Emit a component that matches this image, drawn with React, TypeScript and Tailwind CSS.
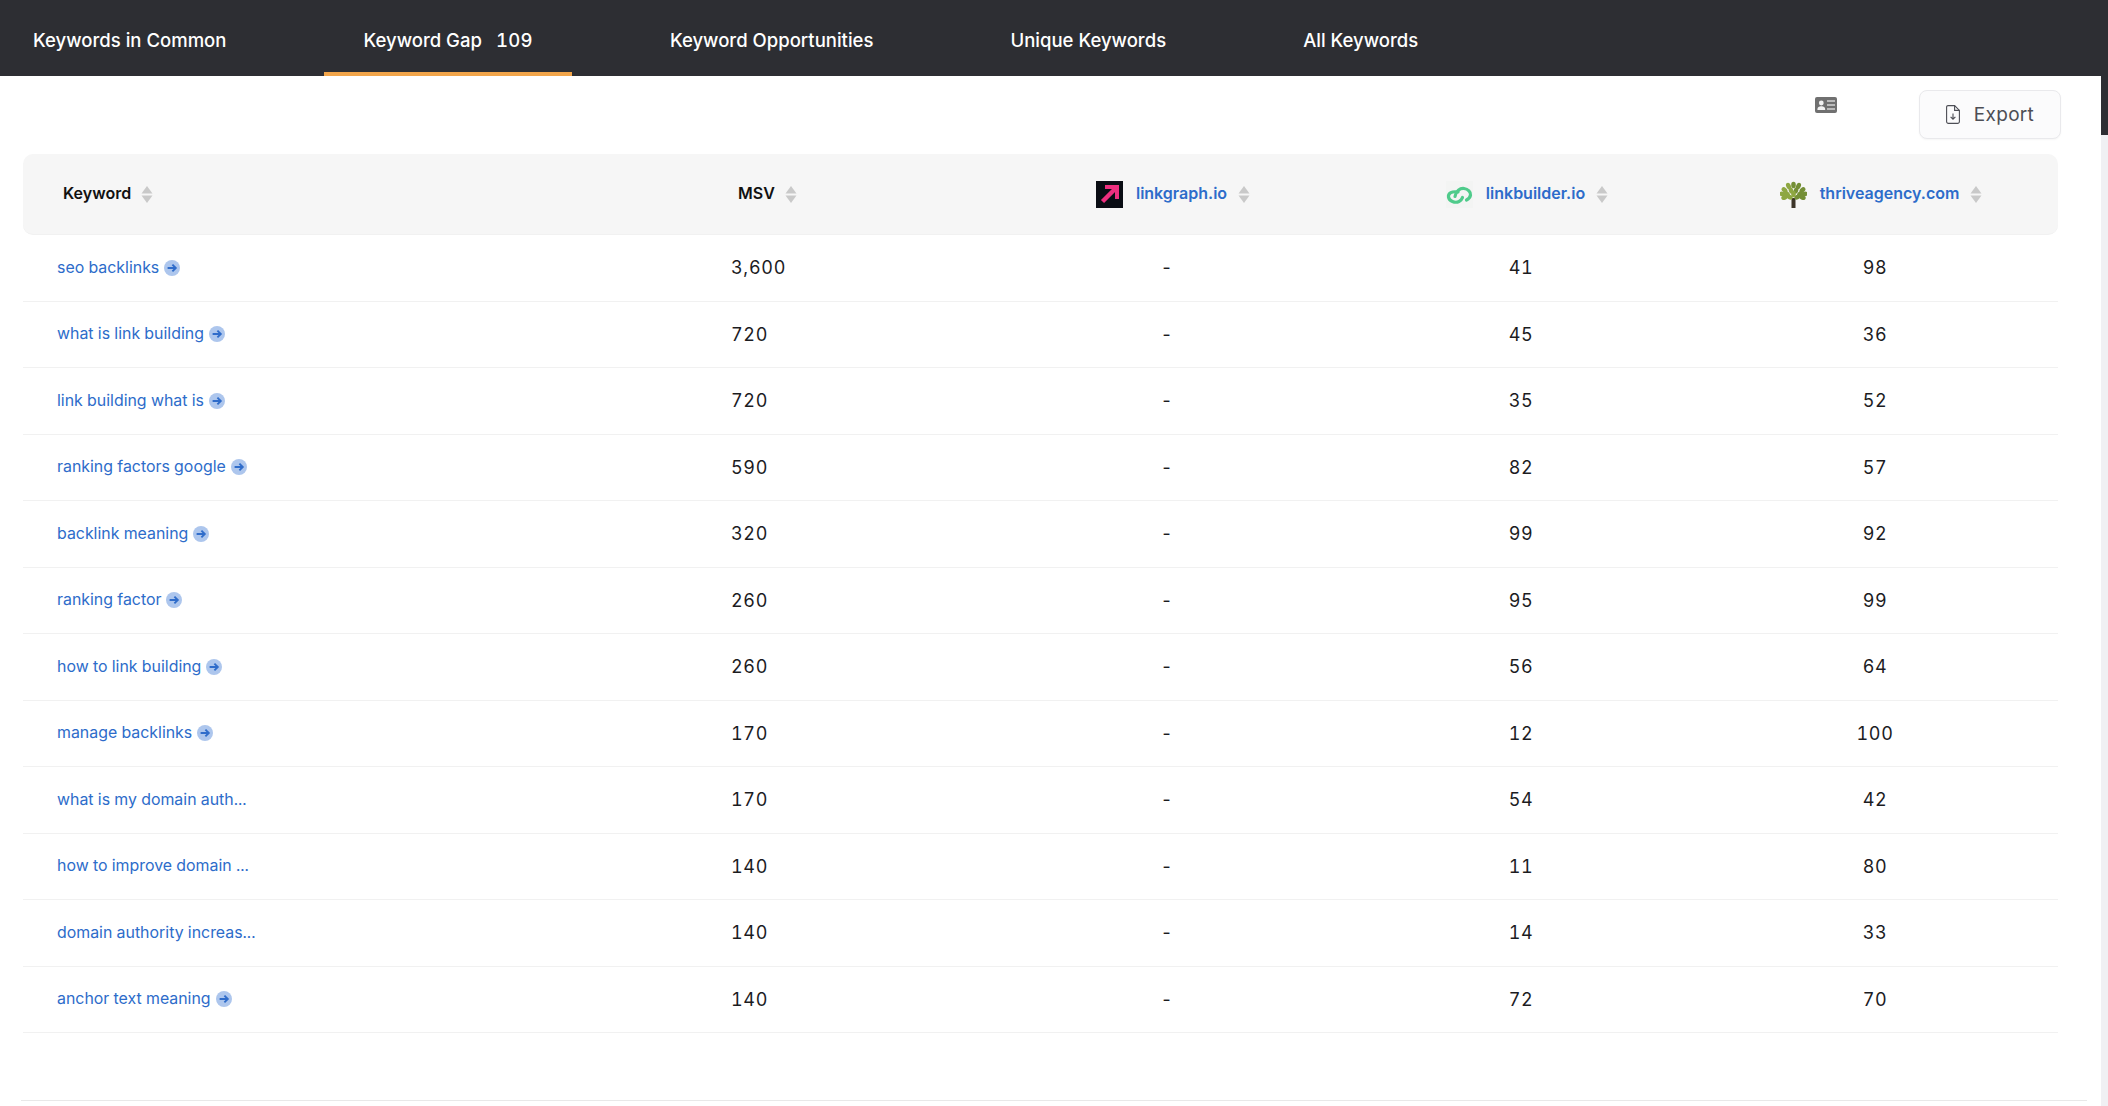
import React from "react";

const rows: [string, boolean, string, string, string][] = [
  ["seo backlinks", true, "3,600", "41", "98"],
  ["what is link building", true, "720", "45", "36"],
  ["link building what is", true, "720", "35", "52"],
  ["ranking factors google", true, "590", "82", "57"],
  ["backlink meaning", true, "320", "99", "92"],
  ["ranking factor", true, "260", "95", "99"],
  ["how to link building", true, "260", "56", "64"],
  ["manage backlinks", true, "170", "12", "100"],
  ["what is my domain auth...", false, "170", "54", "42"],
  ["how to improve domain ...", false, "140", "11", "80"],
  ["domain authority increas...", false, "140", "14", "33"],
  ["anchor text meaning", true, "140", "72", "70"],
];

function Sort() {
  return (
    <svg width="12" height="17" viewBox="0 0 12 17" className="shrink-0">
      <path d="M6 0L11.5 7.4H0.5Z" fill="#c9c9c9" />
      <path d="M6 17L11.5 9.4H0.5Z" fill="#c9c9c9" />
    </svg>
  );
}

function Go() {
  return (
    <svg width="16" height="16" viewBox="0 0 16 16" className="shrink-0">
      <circle cx="8" cy="8" r="8" fill="#adc6ed" />
      <path d="M3.6 8H11.6M8.4 4.6L11.8 8L8.4 11.4" fill="none" stroke="#2f6cca" strokeWidth="1.9" />
    </svg>
  );
}

function LinkGraphLogo() {
  return (
    <svg width="27" height="27" viewBox="0 0 27 27" className="shrink-0">
      <rect width="27" height="27" fill="#0a0d14" />
      <path d="M9 6H21V18" fill="none" stroke="#ee2f7f" strokeWidth="4" />
      <path d="M20 7L6.5 20.5" fill="none" stroke="#ee2f7f" strokeWidth="4.5" />
    </svg>
  );
}

function LinkBuilderLogo() {
  return (
    <svg width="27" height="27" viewBox="0 0 27 27" className="shrink-0">
      <rect width="27" height="27" fill="#f3f4f3" />
      <path d="M12 11C6 10 2 12 2.5 16C3 20 9 22.5 13 20.5C15 19.5 16 18 16.5 16.5" fill="none" stroke="#4fcb8b" strokeWidth="3.2" strokeLinecap="round" />
      <path d="M9 15.5C10 10 14 7 18 7.5C22 8 25 11 24.5 14C24.2 16.5 22.5 18 20.5 19" fill="none" stroke="#4fcb8b" strokeWidth="3.2" strokeLinecap="round" />
    </svg>
  );
}

function ThriveLogo() {
  const leaves: [number, number, number][] = [
    [13.5, 4, 0], [8.5, 5, -25], [18.5, 5, 25], [4.5, 9, -50], [22.5, 9, 50],
    [2.5, 13, -80], [24.5, 13, 80], [7, 13, -45], [20, 13, 45], [11, 9.5, -15],
    [16, 9.5, 15], [4.5, 16.5, -110], [22.5, 16.5, 110], [9.5, 16, -60], [17.5, 16, 60], [13.5, 13, 0],
  ];
  return (
    <svg width="27" height="27" viewBox="0 0 27 27" className="shrink-0">
      <path d="M11.5 17H15.5V27H11.5Z" fill="#3d3529" />
      {leaves.map(([x, y, r], i) => (
        <ellipse key={i} cx={x} cy={y} rx="2.3" ry="3.3" transform={`rotate(${r} ${x} ${y})`} fill={i % 2 ? "#8ea742" : "#748f36"} />
      ))}
    </svg>
  );
}

function SiteHead({ logo, name }: { logo: React.ReactNode; name: string }) {
  return (
    <div className="flex items-center justify-center pl-[2px]">
      {logo}
      <span className="mb-[2px] ml-[13px] text-[16px] font-semibold text-[#2d6cca]">{name}</span>
      <span className="ml-[11px] flex"><Sort /></span>
    </div>
  );
}

export default function App() {
  return (
    <div className="flex h-screen w-full overflow-hidden bg-white font-[Inter,sans-serif]">
      <div className="min-w-0 flex-1">
        <nav className="flex h-[76px] items-stretch gap-[59px] bg-[#2d2e33] pl-[33px] text-[18.55px] font-medium text-white">
          <a className="flex items-center pr-[39px] pt-[5px] leading-none">Keywords in Common</a>
          <a className="flex items-center gap-[14px] border-b-4 border-[#f2a54a] px-[39px] pt-[9px] leading-none">
            <span>Keyword Gap</span>
            <span className="tabular-nums tracking-[0.3px]">109</span>
          </a>
          <a className="flex items-center px-[39px] pt-[5px] leading-none">Keyword Opportunities</a>
          <a className="flex items-center px-[39px] pt-[5px] leading-none">Unique Keywords</a>
          <a className="flex items-center px-[39px] pt-[5px] leading-none">All Keywords</a>
        </nav>

        <div className="flex h-[78px] items-start justify-end pr-[40px] pt-[14px]">
          <svg width="22" height="16" viewBox="0 0 22 16" className="mr-[82px] mt-[7px]">
            <rect width="22" height="16" rx="2" fill="#707070" />
            <circle cx="6.3" cy="6" r="2.4" fill="#f2f2f2" />
            <path d="M2.4 13C2.4 10 4 9.3 6.3 9.3S10.2 10 10.2 13Z" fill="#f2f2f2" />
            <path d="M12 4H20M12 8H20M12 12H20" stroke="#d4d4d4" strokeWidth="1.6" />
          </svg>
          <button className="flex h-[49px] w-[142px] items-center justify-center gap-[14px] rounded-lg border border-[#e9e9ec] bg-[#fbfbfc] text-[19px] tracking-[0.3px] text-[#4d4e55] shadow-[0_1px_2px_rgba(0,0,0,0.04)]">
            <svg width="14" height="19" viewBox="0 0 14 19" fill="none" stroke="#4d4e55" strokeWidth="1.1">
              <path d="M2 0.6H8.6L13.4 5.4V16.6A1.8 1.8 0 0 1 11.6 18.4H2.4A1.8 1.8 0 0 1 0.6 16.6V2A1.4 1.4 0 0 1 2 0.6Z" />
              <path d="M8.6 0.6V5.4H13.4" />
              <path d="M7 8.5V14M4.6 11.8L7 14.2L9.4 11.8" />
            </svg>
            <span className="pt-[2px]">Export</span>
          </button>
        </div>

        <div className="ml-[23px] w-[2035px]">
          <div className="grid h-[81px] grid-cols-[708px_258px_354px_354px_354px] items-center rounded-[10px] border-b border-[#f1f1f1] bg-[#f6f6f6] pl-[6px] text-[16px] font-semibold text-[#111]">
            <div className="flex items-center gap-[10px] pl-[34px]">
              <span className="mb-[2px]">Keyword</span>
              <Sort />
            </div>
            <div className="flex items-center gap-[10px] pl-[1px]">
              <span className="mb-[2px]">MSV</span>
              <Sort />
            </div>
            <SiteHead logo={<LinkGraphLogo />} name="linkgraph.io" />
            <SiteHead logo={<LinkBuilderLogo />} name="linkbuilder.io" />
            <SiteHead logo={<ThriveLogo />} name="thriveagency.com" />
          </div>

          {rows.map(([kw, go, msv, a, b]) => (
            <div key={kw} className="grid h-[66.5px] grid-cols-[708px_258px_354px_354px_354px] items-center border-b border-[#f1f1f1] text-[18px] tabular-nums tracking-[0.7px] text-[#1c1c1f]">
              <div className="flex items-center gap-[5px] pl-[34px] text-[15.9px] tracking-normal text-[#2d6cca]">
                <span>{kw}</span>
                {go && <Go />}
              </div>
              <div>{msv}</div>
              <div className="pl-[2px] text-center">-</div>
              <div className="pl-[2px] text-center">{a}</div>
              <div className="pl-[2px] text-center">{b}</div>
            </div>
          ))}
        </div>

        <div className="ml-[21px] mt-[67px] w-[2066px] border-t border-[#e8e8e8]" />
      </div>

      <div className="w-[7px] shrink-0 bg-[#f0f0f3]">
        <div className="h-[135px] bg-[#2d2e33]" />
      </div>
    </div>
  );
}
